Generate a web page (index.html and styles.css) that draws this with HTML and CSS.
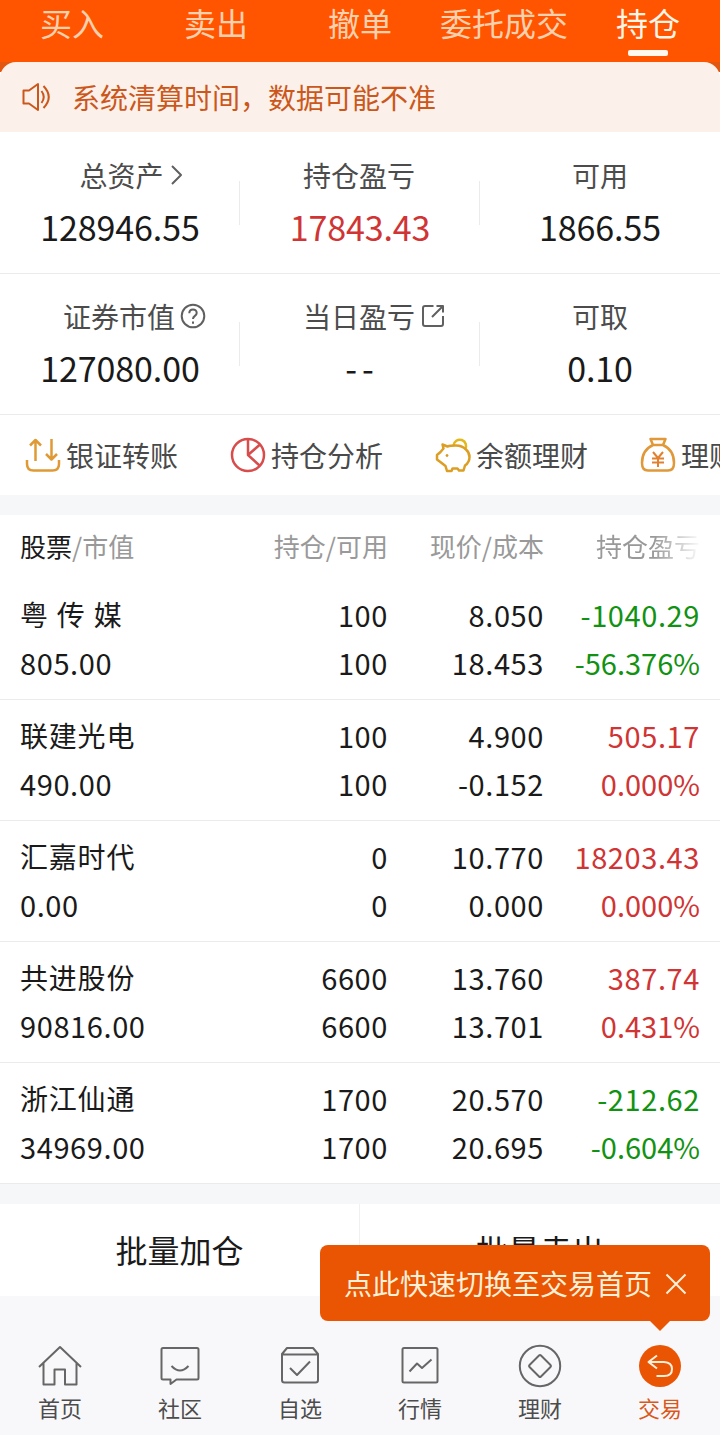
FILE: index.html
```html
<!DOCTYPE html>
<html lang="zh-CN">
<head>
  <meta charset="UTF-8">
  <meta name="viewport" content="width=device-width, initial-scale=1.0">
  <title>持仓</title>
  <link rel="stylesheet" href="styles.css">
</head>
<body>

  <nav class="tabs">
    <a>买入</a>
    <a>卖出</a>
    <a>撤单</a>
    <a>委托成交</a>
    <a class="active">持仓</a>
  </nav>

  <div class="notice-wrap">
    <div class="notice">
      <svg width="30" height="30" viewBox="0 0 30 30">
        <path d="M1.500 8.500H7L16 2V28L7 21.500H1.500Z M19.500 9Q24 15 19.500 21 M21.500 4Q32 15 21.500 26"/>
      </svg>
      <span>系统清算时间，数据可能不准</span>
    </div>
  </div>

  <section class="summary">
    <div class="cell">
      <div class="label label-total">总资产<svg class="arrow" width="14" height="22" viewBox="0 0 14 22"><path d="M2 2L11 11L2 20"/></svg></div>
      <div class="value">128946.55</div>
    </div>
    <div class="cell">
      <div class="label">持仓盈亏</div>
      <div class="value up">17843.43</div>
    </div>
    <div class="cell">
      <div class="label">可用</div>
      <div class="value">1866.55</div>
    </div>
    <div class="cell">
      <div class="label">证券市值<svg class="help" width="26" height="26" viewBox="0 0 26 26"><circle cx="13" cy="13" r="11.300"/><path d="M9.300 10.200C9.300 5.200 16.700 5.200 16.700 10C16.700 13 13 12.800 13 16M13 18.500V20.700"/></svg></div>
      <div class="value">127080.00</div>
    </div>
    <div class="cell">
      <div class="label">当日盈亏<svg class="share" width="24" height="24" viewBox="0 0 24 24"><path d="M12.500 2H4Q2 2 2 4V20Q2 22 4 22H20Q22 22 22 20V12M11 13L22 2M15.500 2H22V8.500"/></svg></div>
      <div class="value dashes">--</div>
    </div>
    <div class="cell">
      <div class="label">可取</div>
      <div class="value">0.10</div>
    </div>
  </section>

  <section class="tools">
    <div class="tool">
      <svg width="36" height="36" viewBox="0 0 36 36" stroke="#e09a35">
        <path d="M2 23V27Q2 33.500 8.500 33.500H27.500Q34 33.500 34 27V23M10.500 24V3M5 8.500L10.500 3L16 8.500M26.500 2V22M21 17L26.500 22.500L32 17"/>
      </svg>
      <span>银证转账</span>
    </div>
    <div class="tool">
      <svg width="36" height="36" viewBox="0 0 36 36" stroke="#d84c4c">
        <circle cx="18" cy="18" r="16"/><path d="M18 2V18L29.500 28.500M18 18L30 7.500"/>
      </svg>
      <span>持仓分析</span>
    </div>
    <div class="tool">
      <svg width="36" height="36" viewBox="0 0 36 36" stroke="#dc9f24">
        <path d="M18.500 8.500A6.300 6.300 0 1 1 30 12.500" stroke="#e3b81c"/>
        <path d="M7.500 7.500L12.500 9.500Q15 8.500 21 8.500Q27 8.500 31 12.500Q34.500 15.500 34.500 20Q34.500 25.500 30 28.500L28.500 33.500H24L22.500 31.500H17.500L16.500 34H12L10.500 29L6 25.500L2 22.500V18L5.500 15L8.500 11.500Z"/>
        <circle cx="12" cy="18.500" r="1" fill="#c98a28" stroke-width="1"/>
      </svg>
      <span>余额理财</span>
    </div>
    <div class="tool">
      <svg width="36" height="36" viewBox="0 0 36 36" stroke="#e09838">
        <path d="M10.500 2H25.500L23 8H13ZM13 8Q2 13 2 26Q2 33.500 8 33.500H28Q34 33.500 34 26Q34 13 23 8"/>
        <path d="M13 15L18 21L23 15M18 21V30M12 21.500H24M12 25.500H24" stroke="#e08030" stroke-width="2"/>
      </svg>
      <span>理财</span>
    </div>
  </section>

  <section class="positions">
    <div class="row head">
      <div><b>股票</b>/市值</div>
      <div>持仓/可用</div>
      <div>现价/成本</div>
      <div class="fade">持仓盈亏</div>
    </div>
    <div class="row">
      <div><p class="name">粤 传 媒</p><p>805.00</p></div>
      <div><p>100</p><p>100</p></div>
      <div><p>8.050</p><p>18.453</p></div>
      <div class="down"><p>-1040.29</p><p class="pct">-56.376%</p></div>
    </div>
    <div class="row">
      <div><p class="name">联建光电</p><p>490.00</p></div>
      <div><p>100</p><p>100</p></div>
      <div><p>4.900</p><p>-0.152</p></div>
      <div class="up"><p>505.17</p><p class="pct">0.000%</p></div>
    </div>
    <div class="row">
      <div><p class="name">汇嘉时代</p><p>0.00</p></div>
      <div><p>0</p><p>0</p></div>
      <div><p>10.770</p><p>0.000</p></div>
      <div class="up"><p>18203.43</p><p class="pct">0.000%</p></div>
    </div>
    <div class="row">
      <div><p class="name">共进股份</p><p>90816.00</p></div>
      <div><p>6600</p><p>6600</p></div>
      <div><p>13.760</p><p>13.701</p></div>
      <div class="up"><p>387.74</p><p class="pct">0.431%</p></div>
    </div>
    <div class="row">
      <div><p class="name">浙江仙通</p><p>34969.00</p></div>
      <div><p>1700</p><p>1700</p></div>
      <div><p>20.570</p><p>20.695</p></div>
      <div class="down"><p>-212.62</p><p class="pct">-0.604%</p></div>
    </div>
  </section>

  <section class="batch">
    <button>批量加仓</button>
    <button>批量卖出</button>
  </section>

  <footer class="bottom-nav">
    <div class="tip">
      <span>点此快速切换至交易首页</span>
      <svg width="22" height="22" viewBox="0 0 22 22"><path d="M1.500 1.500L20.500 20.500M20.500 1.500L1.500 20.500"/></svg>
    </div>
    <a>
      <svg width="44" height="44" viewBox="0 0 44 44"><path d="M1 23L22 3L43 23M5.500 19V40.500H16.500V25.500H27V40.500H38.500V19"/></svg>
      <span>首页</span>
    </a>
    <a>
      <svg width="44" height="44" viewBox="0 0 44 44"><path d="M5 4H39Q40.500 4 40.500 5.500V34Q40.500 35.500 39 35.500H18.500L12.500 40V35.500H5Q3.500 35.500 3.500 34V5.500Q3.500 4 5 4ZM13.500 22Q22 31 30.500 22"/></svg>
      <span>社区</span>
    </a>
    <a>
      <svg width="44" height="44" viewBox="0 0 44 44"><path d="M4 10L9 4H35L40 10V36Q40 38.500 37.500 38.500H6.500Q4 38.500 4 36ZM4 10.500H40M12 24L19 31L32 17.500"/></svg>
      <span>自选</span>
    </a>
    <a>
      <svg width="44" height="44" viewBox="0 0 44 44"><rect x="4.500" y="4" width="35" height="34.500" rx="1.500"/><path d="M11.500 27.500L19 19.500L24 24L33.500 15.500"/></svg>
      <span>行情</span>
    </a>
    <a>
      <svg width="44" height="44" viewBox="0 0 44 44"><circle cx="22" cy="22" r="20.200"/><path d="M21 11.500Q22 10.500 23 11.500L32.500 21Q33.500 22 32.500 23L23 32.500Q22 33.500 21 32.500L11.500 23Q10.500 22 11.500 21Z"/></svg>
      <span>理财</span>
    </a>
    <a class="active">
      <svg width="44" height="44" viewBox="0 0 44 44"><circle cx="22" cy="22" r="21"/><path d="M19 11.500L10.500 18L19 24.500M10.500 18H26Q34 18.500 34 25Q34 32 26 32H18.500"/></svg>
      <span>交易</span>
    </a>
  </footer>

</body>
</html>
```
FILE: styles.css
```css
* {
  box-sizing: border-box;
}

body {
  margin: 0;
  width: 720px;
  height: 1435px;
  overflow: hidden;
  display: flex;
  flex-direction: column;
  background: #f6f7f9;
  color: #1a1a1a;
  font-family: "Noto Sans CJK SC", sans-serif;
}

p {
  margin: 0;
}

svg {
  flex: none;
  fill: none;
  stroke-width: 2;
  stroke-linejoin: round;
}

.up {
  color: #d03434;
}

.down {
  color: #129212;
}

/* top tabs */
.tabs {
  display: flex;
  height: 62px;
  background: #ff5500;
}

.tabs a {
  flex: 1;
  display: flex;
  flex-direction: column;
  align-items: center;
  font-size: 32px;
  line-height: 45px;
  color: #ffd0ae;
}

.tabs .active {
  color: #fff6e8;
}

.tabs .active::after {
  content: "";
  width: 40px;
  height: 6px;
  margin-top: 5px;
  border-radius: 2px;
  background: #fff8ee;
}

.notice-wrap {
  height: 70px;
  background: linear-gradient(#e2560f 10px, #fff 10px);
}

.notice {
  display: flex;
  align-items: center;
  gap: 20px;
  height: 70px;
  padding: 0 22px;
  border-radius: 16px 16px 0 0;
  background: #fcf0ea;
  color: #cb571b;
  font-size: 28px;
}

.notice svg {
  stroke: #cb571b;
}

/* account summary */
.summary {
  display: grid;
  grid-template-columns: repeat(3, 240px);
  grid-template-rows: 142px 141px;
  background: #fff;
}

.cell {
  position: relative;
  padding-top: 21px;
  border-bottom: 1px solid #ebebeb;
  text-align: center;
}

.cell:nth-child(-n+3) {
  padding-top: 22px;
}

.cell:not(:nth-child(3n))::after {
  content: "";
  position: absolute;
  right: 0;
  bottom: 48px;
  width: 1px;
  height: 44px;
  background: #ebebeb;
}

.label {
  display: flex;
  align-items: center;
  justify-content: center;
  height: 42px;
  padding-right: 2px;
  font-size: 28px;
  color: #4c4c4c;
}

.cell:nth-child(3n) .label {
  padding-right: 0;
}

.label-total {
  padding-left: 5px;
}

.label svg {
  stroke: #606060;
}

.label .arrow {
  margin: 0 -20px 0 6px;
}

.label .help {
  margin: 0 -31px 0 5px;
}

.label .share {
  margin: 0 -30px 0 6px;
}

.value {
  height: 62px;
  font-size: 34px;
  line-height: 62px;
  letter-spacing: -0.1px;
}

.dashes {
  padding-left: 4px;
  letter-spacing: 5px;
}

/* shortcuts, cut off at the right edge */
.tools {
  display: flex;
  height: 80px;
  padding-left: 25px;
  overflow: hidden;
  background: #fff;
}

.tool {
  flex: 0 0 205px;
  display: flex;
  align-items: center;
  gap: 5px;
  font-size: 28px;
  color: #4a4a4a;
  white-space: nowrap;
}

.tool svg {
  stroke-width: 2.5;
}

/* holdings */
.positions {
  margin-top: 20px;
  background: #fff;
}

.row {
  display: grid;
  grid-template-columns: 208px 160px 156px 156px;
  height: 121px;
  padding: 11px 20px 0;
  border-bottom: 1px solid #ebebeb;
  font-size: 29px;
  line-height: 48px;
  letter-spacing: 0.6px;
}

.row > div {
  text-align: right;
  white-space: nowrap;
}

.row > div:first-child {
  text-align: left;
}

.row .name {
  font-size: 28px;
  letter-spacing: 0.8px;
  word-spacing: 1px;
}

.row .pct {
  letter-spacing: 0;
}

.row.head {
  height: 64px;
  padding-top: 7px;
  border: 0;
  font-size: 26px;
  letter-spacing: 0;
  color: #999;
}

.head b {
  font-weight: 400;
  color: #1a1a1a;
}

.head .fade {
  -webkit-mask-image: linear-gradient(to right, #000 110px, transparent 158px);
  mask-image: linear-gradient(to right, #000 110px, transparent 158px);
}

.batch {
  display: flex;
  height: 92px;
  margin-top: 20px;
  background: #fff;
}

.batch button {
  flex: 0 0 360px;
  padding: 0 0 3px;
  border: 0;
  background: none;
  font: 32px "Noto Sans CJK SC", sans-serif;
  color: #1a1a1a;
}

.batch button:first-child {
  border-right: 1px solid #f0f0f0;
}

/* bottom navigation */
.bottom-nav {
  position: relative;
  flex: 1;
  display: flex;
  padding-top: 48px;
  background: #f8f8fa;
}

.bottom-nav a {
  flex: 1;
  display: flex;
  flex-direction: column;
  align-items: center;
  font-size: 22px;
  line-height: 38px;
  color: #4c4c4c;
}

.bottom-nav svg {
  stroke: #666;
}

.bottom-nav .active {
  color: #d9581a;
}

.bottom-nav .active svg {
  stroke: #fff0dc;
}

.bottom-nav .active circle {
  fill: #e95503;
  stroke: none;
}

.tip {
  position: absolute;
  top: -51px;
  right: 10px;
  display: flex;
  align-items: center;
  gap: 13px;
  width: 390px;
  height: 76px;
  padding: 0 0 1px 24px;
  border-radius: 8px;
  background: #e95503;
  color: #fff0d8;
  font-size: 28px;
  white-space: nowrap;
}

.tip::after {
  content: "";
  position: absolute;
  top: 100%;
  right: 40px;
  border: 10px solid transparent;
  border-top-color: #e95503;
  border-bottom: 0;
}

.bottom-nav .tip svg {
  margin-top: 2px;
  stroke: #fff0d8;
}
```
